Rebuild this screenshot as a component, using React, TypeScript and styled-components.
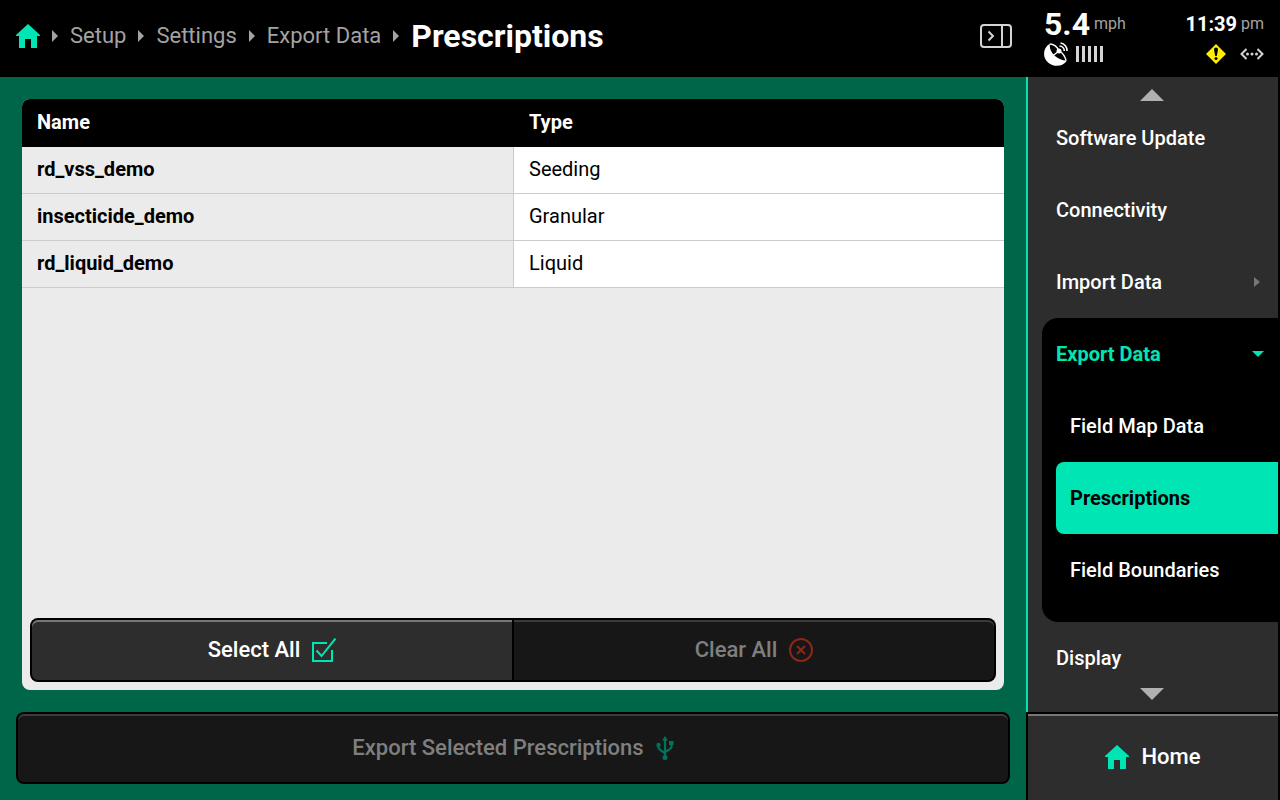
import React from "react";
import styled, { createGlobalStyle, css } from "styled-components";

const color = {
  black: "#000000",
  surface: "#2d2d2d",
  disabled: "#171717",
  edge: "#777777",
  edgeDisabled: "#3c3a3b",
  muted: "#a3a3a3",
  accent: "#00e5b4",
  green: "#006649",
  panel: "#ebebeb",
  line: "#cccccc",
  white: "#ffffff",
};

const GlobalStyle = createGlobalStyle`
  *, *::before, *::after { box-sizing: border-box; }
  body {
    margin: 0;
    background: ${color.black};
    font-family: Roboto, "Liberation Sans", sans-serif;
    color: ${color.white};
  }
  button { font: inherit; color: inherit; margin: 0; padding: 0; border: 0; background: none; }
  a { color: inherit; text-decoration: none; }
  svg { display: block; flex: none; }
`;

const Page = styled.div`
  display: flex;
  flex-direction: column;
  min-height: 100vh;
`;

const Header = styled.header`
  display: flex;
  height: 77px;
`;

const Trail = styled.nav`
  flex: 1;
  display: flex;
  align-items: center;
  gap: 12px;
  padding: 0 14px 5px 16px;
`;

const Crumb = styled.a`
  font-size: 22px;
  line-height: 28px;
  color: ${color.muted};
`;

const Title = styled.h1`
  margin: 0;
  font-size: 32px;
  line-height: 36px;
  font-weight: 700;
`;

const PanelToggle = styled.button`
  margin-left: auto;
`;

const Status = styled.section`
  width: 254px;
  padding: 8px 16px 0 18px;
  display: flex;
  flex-direction: column;
  gap: 2px;
`;

const StatusRow = styled.div`
  display: flex;
  align-items: center;
  justify-content: space-between;
`;

const Reading = styled.div<{ $large?: boolean }>`
  display: flex;
  align-items: center;
  gap: 4px;
  font-size: ${(p) => (p.$large ? 32 : 20)}px;
  line-height: 32px;
  font-weight: 700;
`;

const Unit = styled.span`
  font-size: 16px;
  font-weight: 400;
  color: ${color.muted};
`;

const IconGroup = styled.div<{ $gap: number }>`
  display: flex;
  align-items: center;
  gap: ${(p) => p.$gap}px;
`;

const Body = styled.div`
  flex: 1;
  display: flex;
`;

const Main = styled.main`
  flex: 1;
  display: flex;
  flex-direction: column;
  gap: 22px;
  padding: 22px 16px 16px;
  background: ${color.green};
`;

const Panel = styled.section`
  flex: 1;
  display: flex;
  flex-direction: column;
  justify-content: space-between;
  margin: 0 6px;
  border-radius: 8px;
  overflow: hidden;
  background: ${color.panel};
`;

const Table = styled.table`
  width: 100%;
  table-layout: fixed;
  border-collapse: separate;
  border-spacing: 0;
  font-size: 20px;
  line-height: 24px;
  text-align: left;
`;

const HeadCell = styled.th`
  height: 48px;
  padding: 0 15px 2px;
  background: ${color.black};
  font-weight: 700;
  & + & { border-left: 1px solid ${color.black}; }
`;

const cell = css`
  height: 47px;
  padding: 0 15px 2px;
  border-bottom: 1px solid ${color.line};
  color: ${color.black};
`;

const NameCell = styled.th`
  ${cell}
  font-weight: 700;
`;

const TypeCell = styled.td`
  ${cell}
  border-left: 1px solid ${color.line};
  background: ${color.white};
`;

const ButtonBar = styled.div`
  display: flex;
  gap: 2px;
  margin: 8px;
  padding: 2px;
  border-radius: 8px;
  background: ${color.black};
`;

const ActionButton = styled.button<{ $tall?: boolean; $corners: string }>`
  flex: 1;
  display: flex;
  align-items: center;
  justify-content: center;
  gap: 12px;
  height: ${(p) => (p.$tall ? 68 : 60)}px;
  border-radius: ${(p) => p.$corners};
  background: ${color.surface};
  box-shadow: inset 0 2px 0 ${color.edge};
  font-size: 22px;
  line-height: 28px;
  font-weight: 500;

  &:disabled {
    background: ${color.disabled};
    box-shadow: inset 0 2px 0 ${color.edgeDisabled};
    color: #7f7f7f;
  }
`;

const ExportFrame = styled.div`
  display: flex;
  padding: 2px;
  border-radius: 8px;
  background: ${color.black};
`;

const Sidebar = styled.aside`
  width: 254px;
  padding-right: 2px;
  display: flex;
  flex-direction: column;
`;

const Menu = styled.nav`
  flex: 1;
  display: flex;
  flex-direction: column;
  border-left: 2px solid ${color.accent};
  background: ${color.surface};
`;

const ScrollButton = styled.button<{ $up?: boolean }>`
  height: ${(p) => (p.$up ? 25 : 24)}px;
  padding: ${(p) => (p.$up ? "0 2px 1px 0" : "0 2px 0 0")};
  display: flex;
  justify-content: center;
  align-items: ${(p) => (p.$up ? "flex-end" : "flex-start")};
`;

const MenuList = styled.div`
  flex: 1 1 0;
  min-height: 0;
  overflow: hidden;
  padding-left: 14px;
`;

const MenuItem = styled.a<{ $tone?: "open" | "selected" }>`
  display: flex;
  align-items: center;
  justify-content: space-between;
  height: 72px;
  padding: 0 14px;
  font-size: 20px;
  line-height: 24px;
  font-weight: 500;
  ${(p) => p.$tone === "open" && css`
    color: ${color.accent};
    font-weight: 700;
  `}
  ${(p) => p.$tone === "selected" && css`
    color: ${color.black};
    font-weight: 700;
    background: ${color.accent};
    border-radius: 8px 0 0 8px;
  `}
`;

const MenuGroup = styled.div`
  padding-bottom: 16px;
  border-radius: 16px 0 0 16px;
  background: ${color.black};
`;

const SubMenu = styled.div`
  padding-left: 14px;
`;

const HomeButton = styled.button`
  height: 88px;
  display: flex;
  align-items: center;
  justify-content: center;
  gap: 12px;
  border-top: 2px solid ${color.black};
  border-left: 2px solid ${color.black};
  background: ${color.surface};
  box-shadow: inset 0 2px 0 ${color.edge};
  font-size: 22px;
  line-height: 28px;
  font-weight: 500;
`;

const HomeIcon = () => (
  <svg width="24" height="24" viewBox="0 0 24 24" fill={color.accent} aria-hidden="true">
    <path d="M12 0 24 11v1h-3v12h-6v-9H9v9H3V12H0v-1z" />
  </svg>
);

const CrumbArrow = () => (
  <svg width="6" height="12" viewBox="0 0 6 12" fill={color.muted} aria-hidden="true">
    <path d="M0 0 6 6 0 12z" />
  </svg>
);

const PanelIcon = () => (
  <svg width="32" height="24" viewBox="0 0 32 24" fill="none" stroke="#d4d4d4" strokeWidth="2" aria-hidden="true">
    <rect x="1" y="1" width="30" height="22" rx="3" />
    <path d="M22 1v22M8.500 7.500 13 12l-4.500 4.500" />
  </svg>
);

const SatelliteIcon = () => (
  <svg width="24" height="24" viewBox="0 0 24 24" aria-hidden="true">
    <path d="M6 1.500C-1 5.500-2 15 4 20.500C10 25.500 19 25 23 18.500C14 19 4 10 6 1.500Z" fill="#fff" />
    <path d="M6 2C9 2 12.500 4 15 8.500M22 18.500C21 14 18.500 11 15.500 9M8.500 14 15 9" stroke="#fff" strokeWidth="1.500" fill="none" />
    <circle cx="15" cy="9" r="2.500" fill="#fff" />
    <path d="M15.500 4a5 5 0 0 1 4.800 5M16.500 1a7.500 7.500 0 0 1 6.500 8" stroke="#fff" strokeWidth="1.600" fill="none" />
  </svg>
);

const SignalBars = () => (
  <svg width="28" height="16" viewBox="0 0 28 16" fill="#d4d4d4" aria-hidden="true">
    {[0, 6, 12, 18, 24].map((x) => (
      <rect key={x} x={x} y="0" width="3" height="16" />
    ))}
  </svg>
);

const WarningIcon = () => (
  <svg width="20" height="20" viewBox="0 0 20 20" aria-hidden="true">
    <path d="M10 0 20 10 10 20 0 10z" fill="#ffee00" />
    <path d="M8 5.500a2 2 0 0 1 4 0L10.800 12H9.200z" fill="#000" />
    <circle cx="10" cy="14.500" r="1.500" fill="#000" />
  </svg>
);

const LinkIcon = () => (
  <svg width="24" height="12" viewBox="0 0 24 12" fill="none" stroke="#d4d4d4" strokeWidth="2" aria-hidden="true">
    <path d="M6.500 1 1.500 6l5 5M17.500 1l5 5-5 5" />
    <g fill="#d4d4d4" stroke="none">
      <circle cx="7.500" cy="6" r="1.500" />
      <circle cx="12" cy="6" r="1.500" />
      <circle cx="16.500" cy="6" r="1.500" />
    </g>
  </svg>
);

const CheckIcon = () => (
  <svg width="24" height="24" viewBox="0 0 24 24" fill="none" stroke={color.accent} strokeWidth="2" aria-hidden="true">
    <path d="M15 5H1v18h19V12" />
    <path d="M4.500 12.500 9.500 18 23.500.500" />
  </svg>
);

const ClearIcon = () => (
  <svg width="24" height="24" viewBox="0 0 24 24" fill="none" stroke="#8c2718" strokeWidth="2" aria-hidden="true">
    <circle cx="12" cy="12" r="11" />
    <path d="m8 8 8 8M16 8l-8 8" />
  </svg>
);

const UsbIcon = () => (
  <svg width="18" height="24" viewBox="0 0 18 24" fill="#00735a" aria-hidden="true">
    <path d="M9 0 12 4.500H6z" />
    <circle cx="9" cy="21.500" r="2.500" />
    <circle cx="2.500" cy="9" r="2.200" />
    <rect x="13" y="5" width="4.500" height="4" />
    <path d="M9 4v17M2.500 9v2.500Q2.500 13.500 9 17M15.500 8v3Q15.500 12.500 9 16" fill="none" stroke="#00735a" strokeWidth="2.200" />
  </svg>
);

const ScrollArrow = ({ up }: { up?: boolean }) => (
  <svg width="24" height="12" viewBox="0 0 24 12" fill="#b0b0b0" aria-hidden="true">
    <path d={up ? "M12 0 24 12H0z" : "M0 0H24L12 12z"} />
  </svg>
);

const ClosedArrow = () => (
  <svg width="12" height="12" viewBox="0 0 12 12" fill="#777777" aria-hidden="true">
    <path d="M2 1 8 6 2 11z" />
  </svg>
);

const OpenArrow = () => (
  <svg width="12" height="6" viewBox="0 0 12 6" fill={color.accent} aria-hidden="true">
    <path d="M0 0H12L6 6z" />
  </svg>
);

const crumbs = ["Setup", "Settings", "Export Data"];

const prescriptions = [
  { name: "rd_vss_demo", type: "Seeding" },
  { name: "insecticide_demo", type: "Granular" },
  { name: "rd_liquid_demo", type: "Liquid" },
];

export default function App() {
  return (
    <Page>
      <GlobalStyle />
      <Header>
        <Trail aria-label="Breadcrumb">
          <a href="#home" aria-label="Home"><HomeIcon /></a>
          <CrumbArrow />
          {crumbs.map((name) => (
            <React.Fragment key={name}>
              <Crumb href="#crumb">{name}</Crumb>
              <CrumbArrow />
            </React.Fragment>
          ))}
          <Title>Prescriptions</Title>
          <PanelToggle aria-label="Toggle side panel"><PanelIcon /></PanelToggle>
        </Trail>
        <Status aria-label="Status">
          <StatusRow>
            <Reading $large>5.4<Unit>mph</Unit></Reading>
            <Reading>11:39<Unit>pm</Unit></Reading>
          </StatusRow>
          <StatusRow>
            <IconGroup $gap={8}><SatelliteIcon /><SignalBars /></IconGroup>
            <IconGroup $gap={14}><WarningIcon /><LinkIcon /></IconGroup>
          </StatusRow>
        </Status>
      </Header>
      <Body>
        <Main>
          <Panel>
            <Table>
              <thead>
                <tr>
                  <HeadCell scope="col">Name</HeadCell>
                  <HeadCell scope="col">Type</HeadCell>
                </tr>
              </thead>
              <tbody>
                {prescriptions.map((row) => (
                  <tr key={row.name}>
                    <NameCell scope="row">{row.name}</NameCell>
                    <TypeCell>{row.type}</TypeCell>
                  </tr>
                ))}
              </tbody>
            </Table>
            <ButtonBar>
              <ActionButton $corners="6px 0 0 6px">Select All<CheckIcon /></ActionButton>
              <ActionButton $corners="0 6px 6px 0" disabled>Clear All<ClearIcon /></ActionButton>
            </ButtonBar>
          </Panel>
          <ExportFrame>
            <ActionButton $tall $corners="6px" disabled>Export Selected Prescriptions<UsbIcon /></ActionButton>
          </ExportFrame>
        </Main>
        <Sidebar>
          <Menu aria-label="Settings">
            <ScrollButton $up aria-label="Scroll up"><ScrollArrow up /></ScrollButton>
            <MenuList>
              <MenuItem href="#update">Software Update</MenuItem>
              <MenuItem href="#connectivity">Connectivity</MenuItem>
              <MenuItem href="#import">Import Data<ClosedArrow /></MenuItem>
              <MenuGroup>
                <MenuItem href="#export" $tone="open">Export Data<OpenArrow /></MenuItem>
                <SubMenu>
                  <MenuItem href="#maps">Field Map Data</MenuItem>
                  <MenuItem href="#prescriptions" $tone="selected" aria-current="page">Prescriptions</MenuItem>
                  <MenuItem href="#boundaries">Field Boundaries</MenuItem>
                </SubMenu>
              </MenuGroup>
              <MenuItem href="#display">Display</MenuItem>
            </MenuList>
            <ScrollButton aria-label="Scroll down"><ScrollArrow /></ScrollButton>
          </Menu>
          <HomeButton><HomeIcon />Home</HomeButton>
        </Sidebar>
      </Body>
    </Page>
  );
}
